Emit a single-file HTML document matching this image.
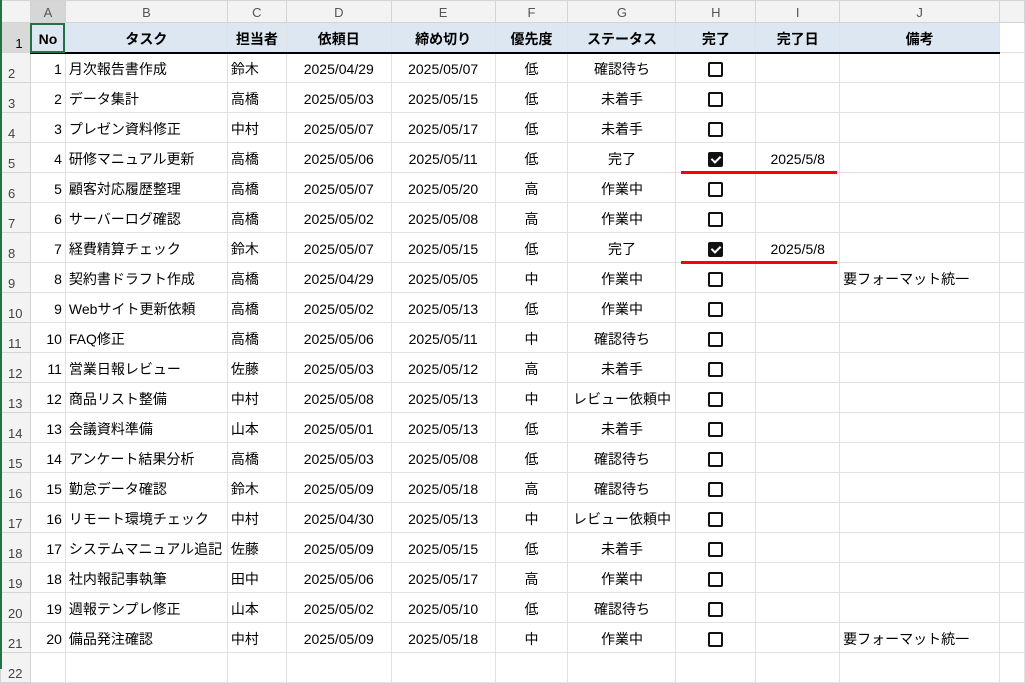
<!DOCTYPE html>
<html><head><meta charset="utf-8"><style>
body{margin:0;width:1025px;height:669px;overflow:hidden;background:#fff;font-family:"Liberation Sans","Noto Sans CJK JP",sans-serif;font-size:14px;color:#000;position:relative}
table{border-collapse:collapse;table-layout:fixed;position:absolute;left:0;top:0}
tr{height:30px}
td{border:1px solid #e1e1e1;padding:0 3px;white-space:nowrap;overflow:hidden;line-height:14px;padding-top:3px;box-sizing:border-box}
tr.ch{height:22px}
tr.ch td{background:#f3f3f3;color:#555;text-align:center;font-size:13px;padding-top:2px;border-color:#d4d4d4}
td.rh{background:#f3f3f3;color:#444;font-size:13px;text-align:left;padding:12px 0 0 7px;border-color:#d4d4d4}
tr.h1 td{background:#dde7f1;font-weight:bold;text-align:center;border-bottom:2px solid #000}
tr.h1 td.rh{background:#d9d9d9;font-weight:normal;border-bottom:1px solid #d4d4d4;color:#000}
.r{text-align:right}.c{text-align:center}
.cb{display:inline-block;width:11px;height:11px;border:2px solid #111;border-radius:2px;vertical-align:middle}
.ck{display:inline-block;width:15px;height:15px;background:#111;border-radius:2px;vertical-align:middle;position:relative}
.ck:after{content:"";position:absolute;left:5px;top:2px;width:4px;height:7px;border:solid #fff;border-width:0 2px 2px 0;transform:rotate(45deg)}
.red{position:absolute;left:681px;width:156px;height:3px;background:#f00}
</style></head><body>
<table>
<colgroup><col style="width:30px"><col style="width:35px"><col style="width:162px"><col style="width:59px"><col style="width:105px"><col style="width:104px"><col style="width:73px"><col style="width:108px"><col style="width:80px"><col style="width:84px"><col style="width:160px"><col style="width:25px"></colgroup>
<tr class="ch"><td style="background:#f3f3f3"></td><td style="background:#d6d6d6">A</td><td>B</td><td>C</td><td>D</td><td>E</td><td>F</td><td>G</td><td>H</td><td>I</td><td>J</td><td></td></tr>
<tr class="h1"><td class="rh">1</td><td style="outline:2px solid #217346;outline-offset:-2px">No</td><td>タスク</td><td>担当者</td><td>依頼日</td><td>締め切り</td><td>優先度</td><td>ステータス</td><td>完了</td><td>完了日</td><td>備考</td><td style="background:#fff;border-bottom:1px solid #e1e1e1"></td></tr>
<tr><td class="rh">2</td><td class="r">1</td><td>月次報告書作成</td><td>鈴木</td><td class="c">2025/04/29</td><td class="c">2025/05/07</td><td class="c">低</td><td class="c">確認待ち</td><td class="c"><span class="cb"></span></td><td></td><td></td><td></td></tr>
<tr><td class="rh">3</td><td class="r">2</td><td>データ集計</td><td>高橋</td><td class="c">2025/05/03</td><td class="c">2025/05/15</td><td class="c">低</td><td class="c">未着手</td><td class="c"><span class="cb"></span></td><td></td><td></td><td></td></tr>
<tr><td class="rh">4</td><td class="r">3</td><td>プレゼン資料修正</td><td>中村</td><td class="c">2025/05/07</td><td class="c">2025/05/17</td><td class="c">低</td><td class="c">未着手</td><td class="c"><span class="cb"></span></td><td></td><td></td><td></td></tr>
<tr><td class="rh">5</td><td class="r">4</td><td>研修マニュアル更新</td><td>高橋</td><td class="c">2025/05/06</td><td class="c">2025/05/11</td><td class="c">低</td><td class="c">完了</td><td class="c"><span class="ck"></span></td><td class="c">2025/5/8</td><td></td><td></td></tr>
<tr><td class="rh">6</td><td class="r">5</td><td>顧客対応履歴整理</td><td>高橋</td><td class="c">2025/05/07</td><td class="c">2025/05/20</td><td class="c">高</td><td class="c">作業中</td><td class="c"><span class="cb"></span></td><td></td><td></td><td></td></tr>
<tr><td class="rh">7</td><td class="r">6</td><td>サーバーログ確認</td><td>高橋</td><td class="c">2025/05/02</td><td class="c">2025/05/08</td><td class="c">高</td><td class="c">作業中</td><td class="c"><span class="cb"></span></td><td></td><td></td><td></td></tr>
<tr><td class="rh">8</td><td class="r">7</td><td>経費精算チェック</td><td>鈴木</td><td class="c">2025/05/07</td><td class="c">2025/05/15</td><td class="c">低</td><td class="c">完了</td><td class="c"><span class="ck"></span></td><td class="c">2025/5/8</td><td></td><td></td></tr>
<tr><td class="rh">9</td><td class="r">8</td><td>契約書ドラフト作成</td><td>高橋</td><td class="c">2025/04/29</td><td class="c">2025/05/05</td><td class="c">中</td><td class="c">作業中</td><td class="c"><span class="cb"></span></td><td></td><td>要フォーマット統一</td><td></td></tr>
<tr><td class="rh">10</td><td class="r">9</td><td>Webサイト更新依頼</td><td>高橋</td><td class="c">2025/05/02</td><td class="c">2025/05/13</td><td class="c">低</td><td class="c">作業中</td><td class="c"><span class="cb"></span></td><td></td><td></td><td></td></tr>
<tr><td class="rh">11</td><td class="r">10</td><td>FAQ修正</td><td>高橋</td><td class="c">2025/05/06</td><td class="c">2025/05/11</td><td class="c">中</td><td class="c">確認待ち</td><td class="c"><span class="cb"></span></td><td></td><td></td><td></td></tr>
<tr><td class="rh">12</td><td class="r">11</td><td>営業日報レビュー</td><td>佐藤</td><td class="c">2025/05/03</td><td class="c">2025/05/12</td><td class="c">高</td><td class="c">未着手</td><td class="c"><span class="cb"></span></td><td></td><td></td><td></td></tr>
<tr><td class="rh">13</td><td class="r">12</td><td>商品リスト整備</td><td>中村</td><td class="c">2025/05/08</td><td class="c">2025/05/13</td><td class="c">中</td><td class="c">レビュー依頼中</td><td class="c"><span class="cb"></span></td><td></td><td></td><td></td></tr>
<tr><td class="rh">14</td><td class="r">13</td><td>会議資料準備</td><td>山本</td><td class="c">2025/05/01</td><td class="c">2025/05/13</td><td class="c">低</td><td class="c">未着手</td><td class="c"><span class="cb"></span></td><td></td><td></td><td></td></tr>
<tr><td class="rh">15</td><td class="r">14</td><td>アンケート結果分析</td><td>高橋</td><td class="c">2025/05/03</td><td class="c">2025/05/08</td><td class="c">低</td><td class="c">確認待ち</td><td class="c"><span class="cb"></span></td><td></td><td></td><td></td></tr>
<tr><td class="rh">16</td><td class="r">15</td><td>勤怠データ確認</td><td>鈴木</td><td class="c">2025/05/09</td><td class="c">2025/05/18</td><td class="c">高</td><td class="c">確認待ち</td><td class="c"><span class="cb"></span></td><td></td><td></td><td></td></tr>
<tr><td class="rh">17</td><td class="r">16</td><td>リモート環境チェック</td><td>中村</td><td class="c">2025/04/30</td><td class="c">2025/05/13</td><td class="c">中</td><td class="c">レビュー依頼中</td><td class="c"><span class="cb"></span></td><td></td><td></td><td></td></tr>
<tr><td class="rh">18</td><td class="r">17</td><td>システムマニュアル追記</td><td>佐藤</td><td class="c">2025/05/09</td><td class="c">2025/05/15</td><td class="c">低</td><td class="c">未着手</td><td class="c"><span class="cb"></span></td><td></td><td></td><td></td></tr>
<tr><td class="rh">19</td><td class="r">18</td><td>社内報記事執筆</td><td>田中</td><td class="c">2025/05/06</td><td class="c">2025/05/17</td><td class="c">高</td><td class="c">作業中</td><td class="c"><span class="cb"></span></td><td></td><td></td><td></td></tr>
<tr><td class="rh">20</td><td class="r">19</td><td>週報テンプレ修正</td><td>山本</td><td class="c">2025/05/02</td><td class="c">2025/05/10</td><td class="c">低</td><td class="c">確認待ち</td><td class="c"><span class="cb"></span></td><td></td><td></td><td></td></tr>
<tr><td class="rh">21</td><td class="r">20</td><td>備品発注確認</td><td>中村</td><td class="c">2025/05/09</td><td class="c">2025/05/18</td><td class="c">中</td><td class="c">作業中</td><td class="c"><span class="cb"></span></td><td></td><td>要フォーマット統一</td><td></td></tr>
<tr><td class="rh">22</td><td></td><td></td><td></td><td></td><td></td><td></td><td></td><td></td><td></td><td></td><td></td></tr>
</table>
<div class="red" style="top:171px"></div>
<div class="red" style="top:261px"></div>
<div style="position:absolute;left:0;top:0;width:2px;height:669px;background:#217346"></div>
</body></html>
